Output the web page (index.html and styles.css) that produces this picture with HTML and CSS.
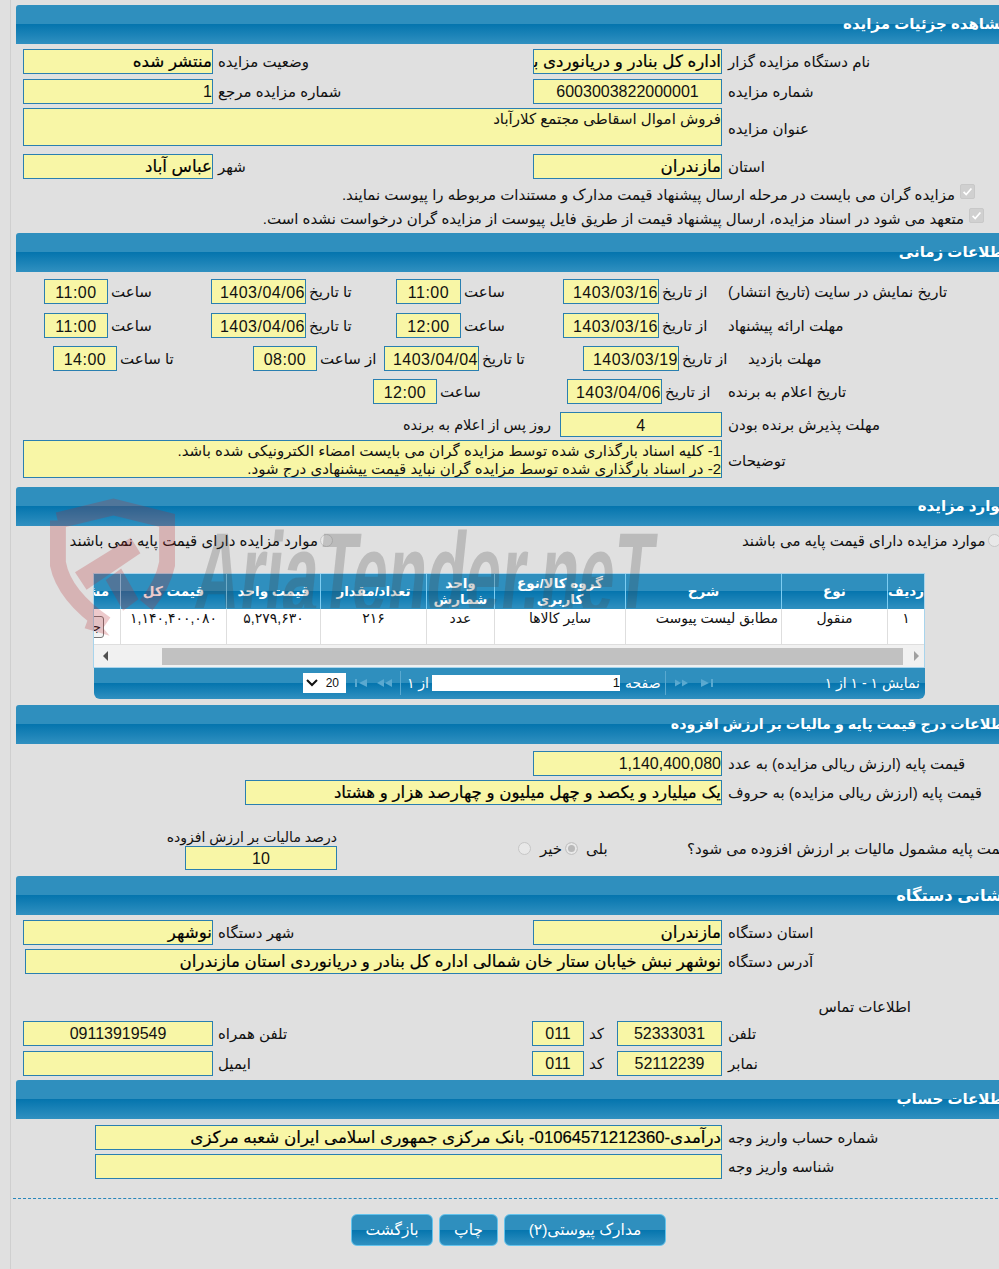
FILE: index.html
```html
<!DOCTYPE html>
<html lang="fa">
<head>
  <meta charset="UTF-8">
  <title>مشاهده جزئیات مزایده</title>
  <link rel="stylesheet" href="styles.css">
</head>
<body>
<div class="page">

  <!-- جزئیات -->
  <h2 class="bar">مشاهده جزئیات مزایده</h2>
  <div class="row two pt5">
    <div class="field strong">منتشر شده</div>
    <div class="lbl">وضعیت مزایده</div>
    <div class="field strong">اداره کل بنادر و دریانوردی بندر نوشهر</div>
    <div class="lbl">نام دستگاه مزایده گزار</div>
  </div>
  <div class="row two mt5">
    <div class="field">1</div>
    <div class="lbl">شماره مزایده مرجع</div>
    <div class="field center">6003003822000001</div>
    <div class="lbl">شماره مزایده</div>
  </div>
  <div class="row wide mt4 tall">
    <div class="field area">فروش اموال اسقاطی مجتمع کلارآباد</div>
    <div class="lbl">عنوان مزایده</div>
  </div>
  <div class="row two mt8">
    <div class="field strong">عباس آباد</div>
    <div class="lbl">شهر</div>
    <div class="field strong">مازندران</div>
    <div class="lbl">استان</div>
  </div>
  <div class="check-line c1">
    <span class="lbl">مزایده گران می بایست در مرحله ارسال پیشنهاد قیمت مدارک و مستندات مربوطه را پیوست نمایند.</span>
    <span class="box"><svg viewBox="0 0 15 15"><path d="M3 8l3 3 6-7" fill="none" stroke="#fff" stroke-width="2"/></svg></span>
  </div>
  <div class="check-line c2">
    <span class="lbl">متعهد می شود در اسناد مزایده، ارسال پیشنهاد قیمت از طریق فایل پیوست از مزایده گران درخواست نشده است.</span>
    <span class="box"><svg viewBox="0 0 15 15"><path d="M3 8l3 3 6-7" fill="none" stroke="#fff" stroke-width="2"/></svg></span>
  </div>

  <!-- زمان -->
  <h2 class="bar">اطلاعات زمانی</h2>
  <div class="row time time-a pt7">
    <div class="field center">11:00</div><div class="lbl">ساعت</div>
    <div class="field date">1403/04/06</div><div class="lbl">تا تاریخ</div>
    <div class="field center">11:00</div><div class="lbl">ساعت</div>
    <div class="field date">1403/03/16</div><div class="lbl">از تاریخ</div>
    <div class="lbl">تاریخ نمایش در سایت (تاریخ انتشار)</div>
  </div>
  <div class="row time time-a mt9">
    <div class="field center">11:00</div><div class="lbl">ساعت</div>
    <div class="field date">1403/04/06</div><div class="lbl">تا تاریخ</div>
    <div class="field center">12:00</div><div class="lbl">ساعت</div>
    <div class="field date">1403/03/16</div><div class="lbl">از تاریخ</div>
    <div class="lbl">مهلت ارائه پیشنهاد</div>
  </div>
  <div class="row time time-c mt8">
    <div class="field center">14:00</div><div class="lbl">تا ساعت</div>
    <div class="field center">08:00</div><div class="lbl">از ساعت</div>
    <div class="field date">1403/04/04</div><div class="lbl">تا تاریخ</div>
    <div class="field date">1403/03/19</div><div class="lbl">از تاریخ</div>
    <div class="lbl">مهلت بازدید</div>
  </div>
  <div class="row time time-d mt8">
    <div class="field center">12:00</div><div class="lbl">ساعت</div>
    <div class="field date">1403/04/06</div><div class="lbl">از تاریخ</div>
    <div class="lbl">تاریخ اعلام به برنده</div>
  </div>
  <div class="row time time-e mt8">
    <div class="lbl">روز پس از اعلام به برنده</div>
    <div class="field center">4</div>
    <div class="lbl">مهلت پذیرش برنده بودن</div>
  </div>
  <div class="row wide mt3 tall">
    <div class="field area">
      <div>1- کلیه اسناد بارگذاری شده توسط مزایده گران می بایست امضاء الکترونیکی شده باشد.</div>
      <div>2- در اسناد بارگذاری شده توسط مزایده گران نباید قیمت پیشنهادی درج شود.</div>
    </div>
    <div class="lbl">توضیحات</div>
  </div>

  <!-- موارد -->
  <h2 class="bar mt9">موارد مزایده</h2>
  <div class="radio-row">
    <span class="lbl">موارد مزایده دارای قیمت پایه نمی باشند</span><span class="radio"></span>
    <span class="lbl second">موارد مزایده دارای قیمت پایه می باشند</span><span class="radio"></span>
  </div>
  <div class="grid-box">
    <div class="grid-clip">
      <table class="items">
        <thead>
          <tr>
            <th class="c-idx">ردیف</th>
            <th class="c-type">نوع</th>
            <th class="c-desc">شرح</th>
            <th class="c-group">گروه کالا/نوع کاربری</th>
            <th class="c-unit">واحد شمارش</th>
            <th class="c-qty">تعداد/مقدار</th>
            <th class="c-price">قیمت واحد</th>
            <th class="c-total">قیمت کل</th>
            <th class="c-more">مشاهده</th>
          </tr>
        </thead>
        <tbody>
          <tr>
            <td>۱</td>
            <td>منقول</td>
            <td class="start">مطابق لیست پیوست</td>
            <td>سایر کالاها</td>
            <td>عدد</td>
            <td>۲۱۶</td>
            <td>۵,۲۷۹,۶۳۰</td>
            <td>۱,۱۴۰,۴۰۰,۰۸۰</td>
            <td class="more-cell"><span class="mini-btn">جزئیات</span></td>
          </tr>
        </tbody>
      </table>
    </div>
    <div class="scroller">
      <span class="arrow left"></span>
      <span class="thumb"></span>
      <span class="arrow right"></span>
    </div>
  </div>
  <div class="pager">
    <div class="page-size"><svg viewBox="0 0 12 8"><path d="M1 1l5 5 5-5" fill="none" stroke="#111" stroke-width="2"/></svg><span>20</span></div>
    <svg class="nav n1" viewBox="0 0 12 10"><path d="M0 1h2v8H0zM12 1v8L4 5z"/></svg>
    <svg class="nav n2" viewBox="0 0 15 10"><path d="M7 1v8L0 5zM15 1v8L8 5z"/></svg>
    <span class="sep s1"></span>
    <span class="of">از ۱</span>
    <div class="page-input">1</div>
    <span class="word">صفحه</span>
    <span class="sep s2"></span>
    <svg class="nav n3" viewBox="0 0 15 10"><path d="M0 1v8l7-4zM8 1v8l7-4z"/></svg>
    <svg class="nav n4" viewBox="0 0 12 10"><path d="M0 1v8l8-4zM10 1h2v8h-2z"/></svg>
    <span class="count">نمایش ۱ - ۱ از ۱</span>
  </div>

  <!-- قیمت -->
  <h2 class="bar pager-gap tight">اطلاعات درج قیمت پایه و مالیات بر ارزش افزوده</h2>
  <div class="row two pt7">
    <div></div><div></div>
    <div class="field">1,140,400,080</div>
    <div class="lbl">قیمت پایه (ارزش ریالی مزایده) به عدد</div>
  </div>
  <div class="row words mt4">
    <div class="field strong">یک میلیارد و یکصد و چهل میلیون و چهارصد هزار و هشتاد</div>
    <div class="lbl">قیمت پایه (ارزش ریالی مزایده) به حروف</div>
  </div>
  <div class="vat-row">
    <div class="vat-col">
      <div class="lbl">درصد مالیات بر ارزش افزوده</div>
      <div class="field center">10</div>
    </div>
    <div class="vat-opts">
      <span class="radio"></span><span class="lbl no">خیر</span>
      <span class="radio on"></span><span class="lbl yes">بلی</span>
    </div>
    <div class="lbl vat-q">قیمت پایه مشمول مالیات بر ارزش افزوده می شود؟</div>
  </div>

  <!-- نشانی -->
  <h2 class="bar loose">نشانی دستگاه</h2>
  <div class="row two pt5">
    <div class="field strong">نوشهر</div>
    <div class="lbl">شهر دستگاه</div>
    <div class="field strong">مازندران</div>
    <div class="lbl">استان دستگاه</div>
  </div>
  <div class="row addr mt4">
    <div class="field strong">نوشهر نبش خیابان ستار خان شمالی اداره کل بنادر و دریانوردی استان مازندران</div>
    <div class="lbl">آدرس دستگاه</div>
  </div>
  <div class="contact-title">اطلاعات تماس</div>
  <div class="row phone">
    <div class="field center">09113919549</div>
    <div class="lbl">تلفن همراه</div>
    <div class="field center">011</div>
    <div class="lbl">کد</div>
    <div class="field center">52333031</div>
    <div class="lbl">تلفن</div>
  </div>
  <div class="row phone mt5">
    <div class="field"></div>
    <div class="lbl">ایمیل</div>
    <div class="field center">011</div>
    <div class="lbl">کد</div>
    <div class="field center">52112239</div>
    <div class="lbl">نمابر</div>
  </div>

  <!-- حساب -->
  <h2 class="bar mt4">اطلاعات حساب</h2>
  <div class="row account pt6">
    <div class="field strong">درآمدی-01064571212360- بانک مرکزی جمهوری اسلامی ایران شعبه مرکزی</div>
    <div class="lbl">شماره حساب واریز وجه</div>
  </div>
  <div class="row account mt4">
    <div class="field"></div>
    <div class="lbl">شناسه واریز وجه</div>
  </div>

  <div class="actions">
    <a class="btn b-back">بازگشت</a>
    <a class="btn b-print">چاپ</a>
    <a class="btn b-docs">مدارک پیوستی(۲)</a>
  </div>

  <!-- واترمارک -->
  <div class="mark">
    <svg class="shield" viewBox="0 0 130 145">
      <path d="M8 22 L66 8 L122 22 V66 Q118 88 100 110" fill="none" stroke="#b8282d" stroke-width="17"/>
      <path d="M8 22 V66 Q14 100 58 130" fill="none" stroke="#b8282d" stroke-width="17"/>
      <path d="M26 76 L84 40 L94 56 L38 94 Z M58 84 L74 72 L92 104 L76 116 Z M42 118 L62 142 L36 134 Z" fill="#b8282d"/>
    </svg>
    <div class="mark-clip"><span class="mark-text">AriaTender.neT</span></div>
  </div>

</div>
</body>
</html>
```

FILE: styles.css
```css
html, body {
  margin: 0;
  padding: 0;
  overflow: hidden;
  background: #e0e0e0;
}

body {
  width: 999px;
  height: 1269px;
  font-family: "Liberation Sans", "DejaVu Sans", sans-serif;
  font-size: 15px;
  color: #111;
}

.page {
  position: relative;
  width: 1000px;
  height: 1269px;
  margin-left: 10px;
  padding-left: 5px;
  border-left: 1px solid #cfcfcf;
  box-sizing: border-box;
}

.page::before {
  content: "";
  display: block;
  height: 5px;
}

.bar {
  width: 1000px;
  height: 39px;
  margin: 0;
  padding-right: 7px;
  box-sizing: border-box;
  direction: rtl;
  line-height: 38px;
  font-size: 15px;
  font-weight: bold;
  color: #fff;
  white-space: nowrap;
  border-top-left-radius: 3px;
  background: linear-gradient(#2f8fbe 0, #2f8fbe 50%, #0575ae 50%, #3090c0 100%);
}

.bar.tight { font-size: 14.3px; }
.bar.loose { font-size: 16.4px; }

.lbl {
  height: 25px;
  direction: rtl;
  text-align: left;
  white-space: nowrap;
  padding-left: 4px;
  line-height: 26px;
}

.lbl:last-child { padding-left: 1px; }

.field {
  height: 25px;
  box-sizing: border-box;
  border: 1px solid #2a7fb0;
  background: #f8f6a6;
  direction: rtl;
  text-align: right;
  font-size: 16px;
  line-height: 24px;
  color: #111;
  white-space: nowrap;
  overflow: hidden;
}

.field.center { text-align: center; }
.field.strong { color: #000; font-size: 16.7px; line-height: 23px; -webkit-text-stroke: 0.2px #000; }
.field.area { height: 38px; padding-top: 1px; font-size: 15px; line-height: 18px; }

.time .field { letter-spacing: 0.5px; line-height: 25px; }
.time .lbl { padding-left: 3px; }
.time .lbl:last-child { padding-left: 0; }

.row { display: grid; padding-left: 7px; align-items: start; }

.two { grid-template-columns: 190px 310px 189px auto; column-gap: 5px; }
.two > .lbl { padding-left: 0; }
.two > .lbl:last-child { padding-left: 1px; }
.wide { grid-template-columns: 699px auto; }
.tall .lbl { height: 38px; line-height: 42px; padding-left: 6px; }
.words { grid-template-columns: 477px auto; padding-left: 229px; }
.words .lbl, .addr .lbl, .account .lbl { padding-left: 6px; }
.addr { grid-template-columns: 697px auto; padding-left: 9px; }
.account { grid-template-columns: 627px auto; padding-left: 79px; }

.time-a { grid-template-columns: 64px 103px 95px 90px 65px 102px 96px 69px auto; padding-left: 28px; }
.time-c { grid-template-columns: 64px 136px 64px 67px 95px 104px 96px 49px auto; padding-left: 37px; }
.time-c .lbl:last-child { padding-left: 20px; }
.time-d { grid-template-columns: 64px 130px 95px 66px auto; padding-left: 357px; }
.time-e { grid-template-columns: 157px 162px auto; padding-left: 387px; }
.time-e .lbl:first-child { padding-left: 0; font-size: 14.5px; }
.time-e .field + .lbl { padding-left: 6px; }
.phone { grid-template-columns: 190px 319px 52px 33px 105px auto; }
.phone .lbl { padding-left: 5px; line-height: 25px; }
.phone .lbl:last-child { padding-left: 6px; }

.pt5 { padding-top: 5px; }
.pt6 { padding-top: 6px; }
.pt7 { padding-top: 7px; }
.mt3 { margin-top: 3px; }
.mt4 { margin-top: 4px; }
.mt5 { margin-top: 5px; }
.mt8 { margin-top: 8px; }
.mt9 { margin-top: 9px; }

.check-line {
  display: flex;
  justify-content: flex-end;
  align-items: flex-start;
  height: 24px;
  line-height: 24px;
}

.check-line .lbl { height: 24px; padding: 0 5px 0 0; line-height: 24px; }
.c1 { width: 959px; margin-top: 4px; }
.c2 { width: 968px; margin-bottom: 2px; }

.box {
  width: 15px;
  height: 15px;
  margin-top: 1px;
  border-radius: 2px;
  background: #d0d0d0;
  border: 1px solid #c8c8c8;
  box-sizing: border-box;
}

.box svg { display: block; width: 13px; height: 13px; }

.radio-row {
  display: flex;
  align-items: center;
  width: 1000px;
  height: 47px;
  padding: 0 0 18px 54px;
  box-sizing: border-box;
}

.radio-row .lbl { padding: 0; width: 248px; }
.radio-row .second { width: 244px; margin-left: 409px; }

.radio {
  display: inline-block;
  flex: none;
  width: 13px;
  height: 13px;
  border-radius: 50%;
  box-sizing: border-box;
  margin-left: 2px;
  border: 1px solid #c6c6c6;
  background: #e8e8e8;
}

.radio.on { box-shadow: inset 0 0 0 2px #e8e8e8; background: #b9b9b9; }

.grid-box {
  width: 832px;
  margin-left: 77px;
  box-sizing: border-box;
  border: 1px solid #a8d4ec;
  background: #fff;
}

.grid-clip { overflow: hidden; direction: rtl; }

.items {
  border-collapse: collapse;
  table-layout: fixed;
  width: 870px;
  direction: rtl;
}

.items th {
  height: 35px;
  padding: 0;
  border-left: 1px solid #7dcdf2;
  font-size: 13.5px;
  line-height: 16px;
  color: #fff;
  white-space: normal;
  background: linear-gradient(#2f8fbe 0, #2f8fbe 50%, #0575ae 50%, #3090c0 100%);
}

.items th.c-more { white-space: nowrap; overflow: hidden; }

.items td {
  height: 35px;
  padding: 0 3px;
  border-left: 1px solid #dedede;
  border-bottom: 1px solid #dedede;
  text-align: center;
  vertical-align: top;
  font-size: 14px;
  line-height: 19px;
  white-space: nowrap;
  overflow: hidden;
}

.items td.start { text-align: right; }
.items td.more-cell { padding-right: 16px; }

.c-idx { width: 36px; }
.c-type { width: 105px; }
.c-desc { width: 155px; }
.c-group { width: 130px; }
.c-unit { width: 67px; }
.c-qty { width: 105px; }
.c-price { width: 93px; }
.c-total { width: 105px; }
.c-more { width: 74px; }

.mini-btn {
  display: block;
  width: 60px;
  height: 22px;
  margin-top: 7px;
  padding-right: 2px;
  box-sizing: border-box;
  border: 1px solid #777;
  border-radius: 3px;
  background: #f3f3f3;
  text-align: right;
  font-size: 13px;
  line-height: 20px;
}

.scroller {
  display: flex;
  align-items: center;
  height: 22px;
  background: #f1f1f1;
}

.thumb { flex: 1; height: 17px; background: #c1c1c1; }
.arrow { width: 0; height: 0; border-style: solid; border-color: transparent; }
.arrow.left { margin: 0 54px 0 9px; border-width: 5px 5px 5px 0; border-right-color: #505050; }
.arrow.right { margin: 0 5px 0 11px; border-width: 5px 0 5px 5px; border-left-color: #a0a0a0; }

.pager {
  display: flex;
  align-items: center;
  width: 831px;
  height: 31px;
  margin-left: 78px;
  padding: 0 0 1px 209px;
  box-sizing: border-box;
  border-radius: 0 0 6px 6px;
  color: #fff;
  font-size: 14px;
  background: linear-gradient(#2f8fbe 0, #2f8fbe 50%, #0575ae 50%, #3090c0 100%);
}

.page-size {
  display: flex;
  align-items: center;
  justify-content: space-between;
  width: 43px;
  height: 20px;
  padding: 0 7px 0 3px;
  box-sizing: border-box;
  background: #fff;
  color: #111;
  font-size: 12px;
}

.page-size svg { width: 12px; height: 8px; }

.nav { height: 10px; fill: #5aa9d0; }
.n1 { width: 12px; margin-left: 9px; }
.n2 { width: 15px; margin-left: 10px; }
.n3 { width: 13px; margin-left: 9px; }
.n4 { width: 12px; margin-left: 13px; }
.sep { width: 1px; height: 24px; background: #5aa9d0; }
.s1 { margin-left: 8px; }
.s2 { margin-left: 5px; }
.of { width: 22px; margin-left: 6px; direction: rtl; white-space: nowrap; }
.page-input {
  width: 188px;
  height: 16px;
  margin-left: 3px;
  background: #fff;
  color: #111;
  direction: rtl;
  text-align: right;
  font-size: 13px;
  line-height: 16px;
}
.word { width: 35px; margin-left: 5px; text-align: center; white-space: nowrap; }
.count { direction: rtl; margin-left: auto; padding-right: 5px; }

.pager-gap { margin-top: 6px; }

.vat-row {
  display: flex;
  align-items: flex-end;
  width: 1000px;
  height: 71px;
  padding: 0 0 6px 169px;
  box-sizing: border-box;
}

.vat-col { width: 152px; flex: none; }
.vat-col .lbl { height: 18px; padding: 0; font-size: 14px; line-height: 18px; margin-left: -17px; }
.vat-col .field { height: 24px; line-height: 23px; }
.vat-opts {
  display: flex;
  align-items: center;
  flex: none;
  height: 25px;
  margin: 0 0 9px 181px;
}
.vat-opts .radio { margin-left: 0; }
.vat-opts .lbl { height: 25px; padding: 0; }
.vat-opts .no { width: 25px; margin-left: 9px; }
.vat-opts .yes { width: 40px; margin-left: 8px; }
.vat-q { margin: 0 0 9px 60px; padding-left: 0; flex: none; }

.contact-title {
  direction: rtl;
  width: 895px;
  height: 24px;
  margin-top: 23px;
  text-align: right;
  line-height: 20px;
}

.actions {
  display: flex;
  gap: 6px;
  width: 1000px;
  margin: 19px 0 0 -3px;
  padding: 15px 0 0 338px;
  box-sizing: border-box;
  border-top: 1px dashed #2a87bb;
}

.btn {
  height: 32px;
  box-sizing: border-box;
  border: 1px solid #63c3ec;
  border-radius: 6px;
  color: #fff;
  direction: rtl;
  text-align: center;
  line-height: 30px;
  font-size: 15.5px;
  background: linear-gradient(#2f8fbe 0, #2f8fbe 50%, #0575ae 50%, #3090c0 100%);
}

.b-back { width: 82px; }
.b-print { width: 59px; }
.b-docs { width: 162px; }

/* over the content, does not take part in the flow */
.mark {
  position: absolute;
  left: 39px;
  top: 498px;
  width: 620px;
  height: 145px;
  pointer-events: none;
}

.shield {
  position: absolute;
  left: 0;
  top: 0;
  width: 125px;
  height: 142px;
  opacity: 0.24;
}

.mark-clip {
  position: absolute;
  left: 133px;
  top: 22px;
  width: 490px;
  height: 88px;
  overflow: hidden;
}

.mark-text {
  position: absolute;
  left: 6px;
  top: -5px;
  font-size: 118px;
  line-height: 118px;
  font-weight: bold;
  white-space: nowrap;
  color: rgba(70, 70, 70, 0.24);
  transform-origin: left bottom;
  transform: skewX(-6deg) scaleX(0.54);
}
```
